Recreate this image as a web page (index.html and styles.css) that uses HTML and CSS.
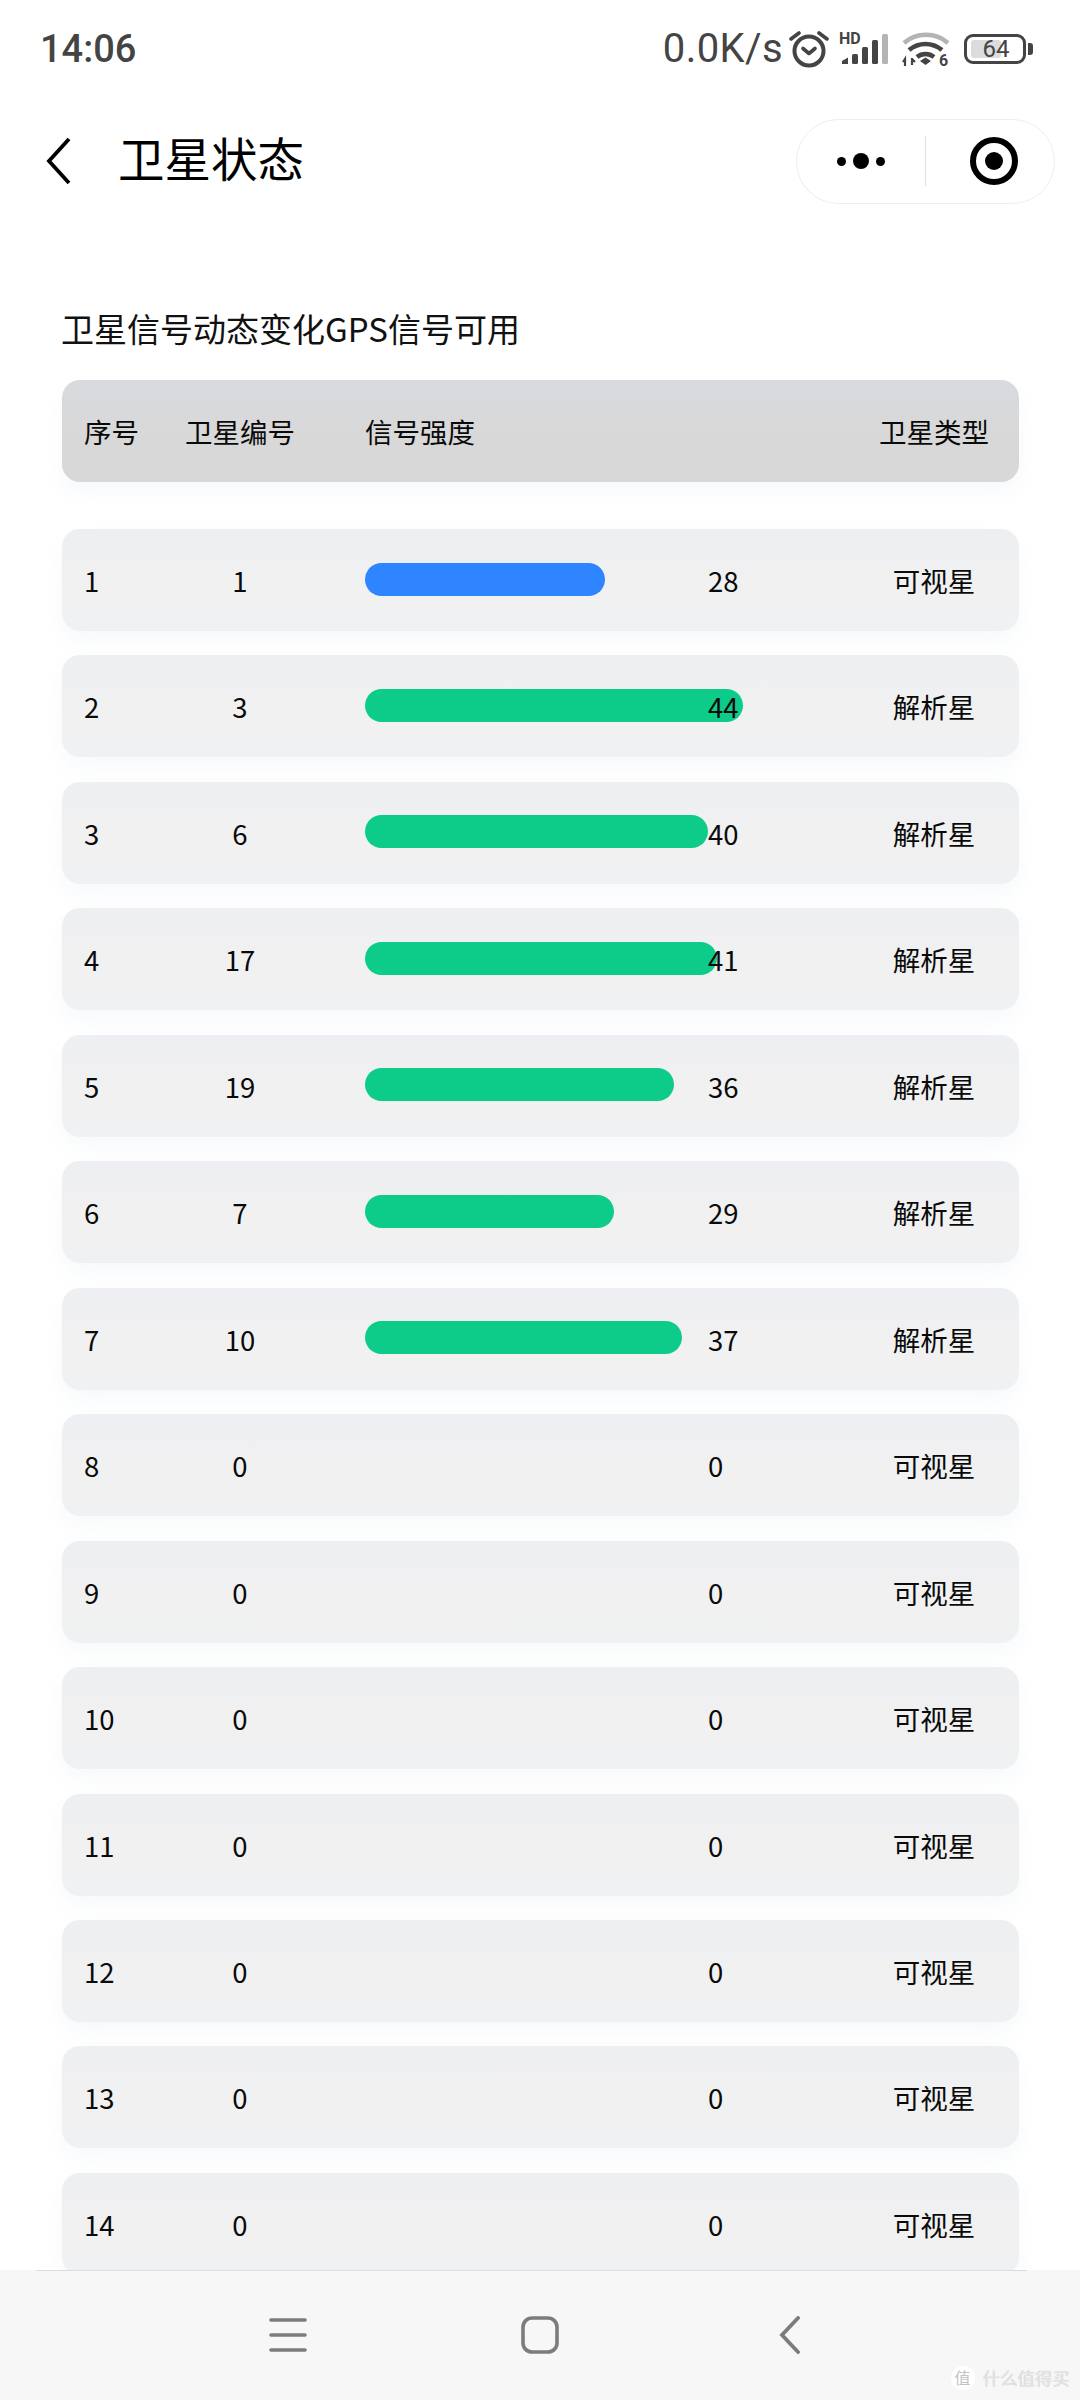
FILE: index.html
```html
<!DOCTYPE html>
<html lang="zh-CN">
<head>
<meta charset="utf-8">
<title>卫星状态</title>
<link rel="stylesheet" href="styles.css">
</head>
<body>
<div class="screen">
  <header class="statusbar">
    <span class="time">14:06</span>
    <div class="status-right">
      <span class="speed">0.0K/s</span>
      <svg class="ic-alarm" width="40" height="38" viewBox="0 0 40 38" fill="none" stroke="#444"><circle cx="20" cy="21" r="14.5" stroke-width="4"/><path d="M14 18.5l6 5 6-5" stroke-width="3.6" stroke-linecap="round" stroke-linejoin="round"/><path d="M2 9l8-6M38 9l-8-6" stroke-width="3.6" stroke-linecap="round"/></svg>
      <svg class="ic-signal" width="50" height="32" viewBox="0 0 50 32"><text x="0" y="11" class="hd">HD</text><path d="M3 28l6-3.500V31H3z" fill="#444"/><rect x="13" y="21" width="6" height="10" rx="1.500" fill="#444"/><rect x="23" y="14" width="6" height="17" rx="1.500" fill="#444"/><rect x="33" y="7" width="6" height="24" rx="1.500" fill="#444"/><rect x="43" y="1" width="6" height="30" rx="1.500" fill="#b4b4b4"/></svg>
      <svg class="ic-wifi" width="48" height="36" viewBox="0 0 48 36" fill="none"><path d="M2 12C14 1 34 1 46 12" stroke="#b4b4b4" stroke-width="4.500"/><path d="M7 19c10-8 23-8 33 0M15 26c5-4 12-4 17 0" stroke="#444" stroke-width="4.500"/><path d="M18 30l5.500-3.500 5.500 3.500-5.500 4z" fill="#444"/><path d="M3 35v-5M1 31l2-3v7M10 34v-7M10 28l3 3" stroke="#444" stroke-width="2.200"/><text x="37" y="35" class="six">6</text></svg>
      <div class="battery"><div class="battery-body"><span class="battery-fill"></span><span class="battery-num">64</span></div><span class="battery-tip"></span></div>
    </div>
  </header>

  <nav class="navbar">
    <svg class="back" width="25" height="48" viewBox="0 0 25 48" fill="none"><path d="M23 2L3 24l20 22" stroke="#000" stroke-width="3.800"/></svg>
    <h1 class="page-title">卫星状态</h1>
    <div class="capsule">
      <div class="capsule-more"><i class="dot"></i><i class="dot dot-big"></i><i class="dot"></i></div>
      <i class="capsule-divider"></i>
      <div class="capsule-target"><i class="target-dot"></i></div>
    </div>
  </nav>

  <main class="content">
    <h2 class="summary">卫星信号动态变化GPS信号可用</h2>
    <div class="row row-head">
      <span class="c-idx">序号</span><span class="c-num">卫星编号</span><span class="c-bar">信号强度</span><span class="c-val"></span><span class="c-type">卫星类型</span>
    </div>
    <div class="rows">
      <div class="row"><span class="c-idx">1</span><span class="c-num">1</span><span class="c-bar"><i class="bar bar-blue" style="width:240px"></i></span><span class="c-val">28</span><span class="c-type">可视星</span></div>
      <div class="row"><span class="c-idx">2</span><span class="c-num">3</span><span class="c-bar"><i class="bar" style="width:378px"></i></span><span class="c-val">44</span><span class="c-type">解析星</span></div>
      <div class="row"><span class="c-idx">3</span><span class="c-num">6</span><span class="c-bar"><i class="bar" style="width:343px"></i></span><span class="c-val">40</span><span class="c-type">解析星</span></div>
      <div class="row"><span class="c-idx">4</span><span class="c-num">17</span><span class="c-bar"><i class="bar" style="width:352px"></i></span><span class="c-val">41</span><span class="c-type">解析星</span></div>
      <div class="row"><span class="c-idx">5</span><span class="c-num">19</span><span class="c-bar"><i class="bar" style="width:309px"></i></span><span class="c-val">36</span><span class="c-type">解析星</span></div>
      <div class="row"><span class="c-idx">6</span><span class="c-num">7</span><span class="c-bar"><i class="bar" style="width:249px"></i></span><span class="c-val">29</span><span class="c-type">解析星</span></div>
      <div class="row"><span class="c-idx">7</span><span class="c-num">10</span><span class="c-bar"><i class="bar" style="width:317px"></i></span><span class="c-val">37</span><span class="c-type">解析星</span></div>
      <div class="row"><span class="c-idx">8</span><span class="c-num">0</span><span class="c-bar"></span><span class="c-val">0</span><span class="c-type">可视星</span></div>
      <div class="row"><span class="c-idx">9</span><span class="c-num">0</span><span class="c-bar"></span><span class="c-val">0</span><span class="c-type">可视星</span></div>
      <div class="row"><span class="c-idx">10</span><span class="c-num">0</span><span class="c-bar"></span><span class="c-val">0</span><span class="c-type">可视星</span></div>
      <div class="row"><span class="c-idx">11</span><span class="c-num">0</span><span class="c-bar"></span><span class="c-val">0</span><span class="c-type">可视星</span></div>
      <div class="row"><span class="c-idx">12</span><span class="c-num">0</span><span class="c-bar"></span><span class="c-val">0</span><span class="c-type">可视星</span></div>
      <div class="row"><span class="c-idx">13</span><span class="c-num">0</span><span class="c-bar"></span><span class="c-val">0</span><span class="c-type">可视星</span></div>
      <div class="row"><span class="c-idx">14</span><span class="c-num">0</span><span class="c-bar"></span><span class="c-val">0</span><span class="c-type">可视星</span></div>
    </div>
  </main>

  <footer class="sysnav">
    <div class="sys-line"></div>
    <svg class="sys-menu" width="38" height="36" viewBox="0 0 38 36" stroke="#7c7c7c" stroke-width="3.600" stroke-linecap="round"><path d="M2 3h34M2 18h34M2 33h34"/></svg>
    <svg class="sys-home" width="38" height="38" viewBox="0 0 38 38" fill="none"><rect x="2" y="2" width="34" height="34" rx="9" stroke="#7c7c7c" stroke-width="3.600"/></svg>
    <svg class="sys-back" width="22" height="38" viewBox="0 0 22 38" fill="none"><path d="M19 2L3 19l16 17" stroke="#7c7c7c" stroke-width="3.800" stroke-linecap="round"/></svg>
    <div class="watermark"><span class="wm-badge">值</span><span class="wm-text">什么值得买</span></div>
  </footer>
</div>
</body>
</html>
```

FILE: styles.css
```css
* { box-sizing: border-box; }
html, body { margin: 0; padding: 0; background: #fff; }
body { font-family: "Noto Sans CJK SC", "Noto Sans", sans-serif; color: #000; }
.screen { width: 1080px; height: 2400px; overflow: hidden; position: relative; background: #fff; }

.statusbar { height: 96px; padding: 26px 47px 0 40px; display: flex; justify-content: space-between; align-items: flex-start; color: #444; }
.time { font-family: Roboto, sans-serif; font-size: 38px; line-height: 46px; font-weight: 500; letter-spacing: 0; }
.status-right { display: flex; align-items: center; height: 46px; }
.speed { font-family: Roboto, sans-serif; font-size: 40px; line-height: 46px; letter-spacing: .4px; margin-right: 6px; }
.ic-signal { margin-left: 10px; overflow: visible; }
.ic-wifi { margin-left: 13px; overflow: visible; }
.hd { font: 700 16px Roboto, sans-serif; fill: #444; }
.six { font: 700 16px Roboto, sans-serif; fill: #444; }
.battery { display: flex; align-items: center; margin-left: 14px; }
.battery-body { position: relative; width: 62px; height: 30px; border: 3px solid #444; border-radius: 9px; display: flex; align-items: center; justify-content: center; }
.battery-fill { position: absolute; left: 4px; top: 3px; bottom: 3px; width: 30px; background: #dcdcdc; border-radius: 3px; }
.battery-num { position: relative; font: 24px/24px Roboto, sans-serif; color: #444; margin-left: 2px; }
.battery-tip { width: 5px; height: 12px; background: #444; border-radius: 0 3px 3px 0; margin-left: 2px; }

.navbar { height: 106px; margin-top: 12px; padding: 0 25px 0 46px; display: flex; align-items: center; }
.back { display: block; margin-right: 47px; }
.page-title { margin: 0 0 8px; font-size: 46.500px; font-weight: 400; line-height: 60px; flex: 1; }
.capsule { width: 259px; height: 85px; border: 1.500px solid #eee; border-radius: 43px; display: flex; align-items: center; }
.capsule-more { width: 128px; display: flex; align-items: center; justify-content: center; gap: 7px; }
.dot { display: block; width: 9px; height: 9px; border-radius: 50%; background: #000; }
.dot-big { width: 16px; height: 16px; }
.capsule-divider { display: block; width: 1px; height: 50px; background: #ddd; }
.capsule-target { width: 48px; height: 48px; margin-left: 44px; border: 6px solid #000; border-radius: 50%; display: flex; align-items: center; justify-content: center; }
.target-dot { display: block; width: 18px; height: 18px; border-radius: 50%; background: #000; }

.content { padding: 90px 61px 0 62px; }
.summary { margin: 0 0 28px -1px; font-size: 33px; font-weight: 400; line-height: 48px; color: #111; }
.rows { display: flex; flex-direction: column; gap: 24.460px; margin-top: 47px; }
.row { height: 102px; padding-left: 22px; border-radius: 18px; background: linear-gradient(#eeeff2, #f1f1f1 60%, #f0f1f3); box-shadow: 0 10px 20px rgba(228,232,242,.28); display: flex; align-items: center; font-size: 27.500px; line-height: 40px; color: #0a0a0a; flex: none; }
.row-head { background: linear-gradient(#d9dade, #d8d8d8 60%, #d8d8da); }
.c-idx { width: 90px; flex: none; }
.c-num { width: 132px; text-align: center; white-space: nowrap; flex: none; }
.c-bar { width: 343px; margin-left: 59px; flex: none; white-space: nowrap; }
.c-val { width: 100px; flex: none; position: relative; z-index: 1; }
.c-type { width: 150px; margin-left: 51px; text-align: center; white-space: nowrap; flex: none; }
.bar { display: block; height: 33px; margin-bottom: 2px; border-radius: 17px; background: #0dcc8a; }
.bar-blue { background: #2f84ff; }

.sysnav { position: absolute; left: 0; right: 0; bottom: 0; height: 130px; background: #f7f7f7; }
.sys-line { position: absolute; top: 0; left: 36px; right: 53px; height: 1px; background: #dcdcdf; }
.sys-menu { position: absolute; left: 269px; top: 47px; }
.sys-home { position: absolute; left: 521px; top: 46px; }
.sys-back { position: absolute; left: 779px; top: 46px; }
.watermark { position: absolute; right: 10px; bottom: 10px; display: flex; align-items: center; gap: 8px; color: #e2e2e2; }
.wm-badge { width: 24px; height: 24px; border-radius: 50%; background: #fff; color: #c4c4c4; font-size: 16px; line-height: 23px; text-align: center; }
.wm-text { font-size: 17.500px; line-height: 24px; text-shadow: 0 0 1px #cfcfcf; }
```
